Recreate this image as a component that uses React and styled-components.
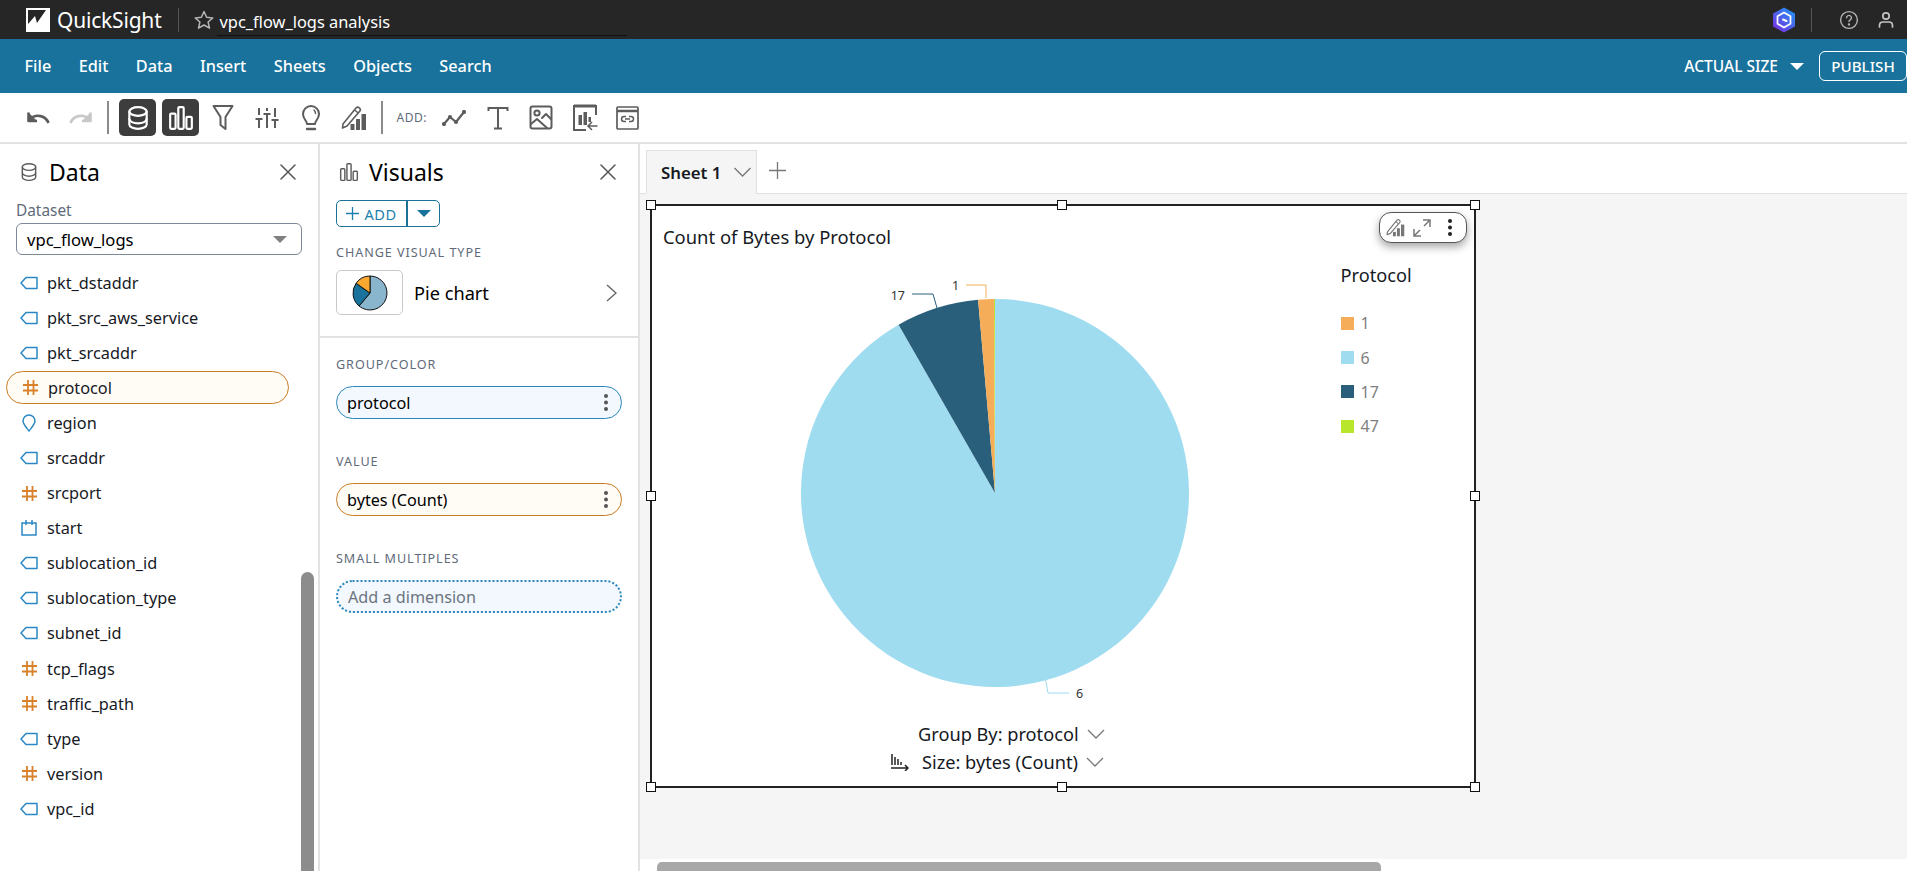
import React from "react";
import styled, { createGlobalStyle } from "styled-components";

const Global = createGlobalStyle`
  html, body { margin: 0; padding: 0; background: #fff; }
  body { font-family: "Noto Sans", "Open Sans", sans-serif; color: #16191f; overflow: hidden; }
  * { box-sizing: border-box; }
`;

const Page = styled.div`
  width: 1907px; height: 871px; display: flex; flex-direction: column; overflow: hidden;
`;
const TopBar = styled.header`
  height: 39px; background: #262626; display: flex; align-items: center; padding-left: 26px; color: #fff; flex: none;
`;
const Brand = styled.span`
  font-size: 21px; margin-left: 7px; color: #fff; letter-spacing: -0.2px;
`;
const TopDivider = styled.span`
  width: 1px; height: 24px; background: #555; margin-left: ${p => p.$ml}px;
`;
const StarSlot = styled.span`
  display: flex; margin-left: 15px;
`;
const TitleBox = styled.div`
  margin-left: 3px; width: 410px; height: 32px; border-bottom: 1px solid #111; font-size: 16.4px; line-height: 35px; padding-left: 3px;
`;
const TopRight = styled.div`
  margin-left: auto; display: flex; align-items: center; height: 100%;
`;
const TopIcon = styled.span`
  display: flex; margin-left: ${p => p.$ml}px;
`;
const MenuBar = styled.nav`
  height: 54px; background: #19729c; color: #fff; display: flex; align-items: center; padding-left: 24.5px; gap: 27.4px; flex: none; font-size: 16.3px; font-weight: 500;
`;
const MenuItem = styled.span``;
const MenuRight = styled.div`
  margin-left: auto; display: flex; align-items: center; font-size: 15.5px;
`;
const Publish = styled.button`
  width: 88px; height: 30px; border: 1px solid #fff; border-radius: 6px; background: transparent; color: #fff; font: 500 15.2px "Noto Sans", sans-serif; margin-left: 15px; padding: 0;
`;
const Toolbar = styled.div`
  height: 51px; border-bottom: 2px solid #e2e2e2; display: flex; align-items: center; padding-left: 16px; flex: none;
`;
const Slot = styled.span`
  width: ${p => p.$w || 43.5}px; display: flex; justify-content: center; align-items: center; flex: none;
`;
const Active = styled.span`
  width: 37px; height: 37px; background: #3d3d3d; border-radius: 5px; display: flex; align-items: center; justify-content: center; margin-right: ${p => p.$mr}px; flex: none;
`;
const ToolSep = styled.span`
  width: 2px; height: 33px; background: #8a8a8a; margin: 0 ${p => p.$mr}px 0 ${p => p.$ml}px; flex: none;
`;
const AddLabel = styled.span`
  width: 33px; font-size: 12px; color: #5f6b7a; letter-spacing: 0.5px; margin-right: 3px; white-space: nowrap;
`;
const Workspace = styled.div`
  flex: 1; display: flex; min-height: 0;
`;
const Panel = styled.aside`
  width: 320px; border-right: 2px solid #e2e2e2; background: #fff; flex: none; position: relative; overflow: hidden;
`;
const PanelHead = styled.div`
  height: 56px; display: flex; align-items: center; padding: 0 22px 1px 19px;
`;
const PanelTitle = styled.h2`
  margin: 0 0 0 10px; font-size: 23px; font-weight: 400; color: #000; flex: 1;
`;
const DatasetLabel = styled.div`
  font-size: 15.4px; line-height: 18px; color: #5f6b7a; margin: 2px 0 0 16px; height: 21px;
`;
const Select = styled.div`
  width: 286px; height: 32px; margin-left: 16px; border: 1px solid #7d8998; border-radius: 6px; display: flex; align-items: center; padding: 0 14px 0 10px; justify-content: space-between; font-size: 16.6px; color: #000;
`;
const Caret = styled.span`
  width: 0; height: 0; border-left: 7px solid transparent; border-right: 7px solid transparent; border-top: 7px solid ${p => p.$c}; display: block;
`;
const FieldList = styled.div`
  margin-top: 10px; display: flex; flex-direction: column;
`;
const FieldRow = styled.div`
  height: ${p => p.$on ? 33 : 35.1}px; display: flex; align-items: center; gap: 9px; font-size: 16.3px; color: #16191f;
  margin: ${p => p.$on ? "1px 0 1.1px 6px" : "0"};
  padding-left: ${p => p.$on ? 14 : 20}px;
  width: ${p => p.$on ? "283px" : "auto"};
  border: ${p => p.$on ? "1px solid #c97c23" : "0"};
  border-radius: 17px;
  background: ${p => p.$on ? "#fffbf5" : "transparent"};
`;
const FieldGlyph = styled.span`
  width: 18px; display: flex; justify-content: center; flex: none;
`;
const ScrollThumb = styled.div`
  position: absolute; left: 301px; top: 428px; width: 13px; bottom: -10px; background: #8c8c8c; border-radius: 7px 7px 0 0;
`;
const AddRow = styled.div`
  margin: 0 0 0 16px; width: 104px; height: 27px; border: 1px solid #1b7196; border-radius: 5px; display: flex; align-items: center; color: #1c80ad; font-size: 14.6px; letter-spacing: 0.5px;
`;
const AddMain = styled.span`
  width: 71px; height: 100%; border-right: 2px solid #1b7196; display: flex; align-items: center; justify-content: center; gap: 5px;
`;
const AddDrop = styled.span`
  flex: 1; display: flex; justify-content: center; align-items: center;
`;
const SectionLabel = styled.div`
  font-size: 12.6px; line-height: 16px; letter-spacing: 0.95px; color: #5f6b7a; margin: ${p => p.$mt}px 0 0 16px;
`;
const TypeRow = styled.div`
  display: flex; align-items: center; margin-top: 9px; padding-bottom: 21px; border-bottom: 2px solid #e2e2e2; padding-left: 16px; font-size: 18.2px; color: #000;
`;
const Thumb = styled.span`
  width: 67px; height: 45px; border: 1px solid #c9c9c9; border-radius: 5px; display: flex; align-items: center; justify-content: center; margin-right: 11px;
`;
const TypeName = styled.span`
  flex: 1;
`;
const Chev = styled.span`
  display: flex; margin-right: 21px;
`;
const Pill = styled.div`
  width: 286px; height: 33px; margin: ${p => p.$mt}px 0 0 16px; border-radius: 17px; border: ${p => p.$dotted ? "2px dotted #2b86bb" : `1px solid ${p.$c}`};
  background: ${p => p.$bg}; display: flex; align-items: center; padding: 0 12px 0 10px; justify-content: space-between; font-size: 16.2px; color: ${p => p.$dotted ? "#6b7480" : "#000"};
`;
const Main = styled.main`
  flex: 1; min-width: 0; display: flex; flex-direction: column; background: #f5f5f5;
`;
const TabBar = styled.div`
  height: 50px; background: #fff; border-bottom: 1px solid #e0e0e0; display: flex; align-items: flex-end; flex: none; padding-left: 6px;
`;
const Tab = styled.div`
  width: 111px; height: 44px; margin-bottom: -1px; background: #f5f5f5; border: 1px solid #e0e0e0; border-bottom: 1px solid #f5f5f5; display: flex; align-items: center; padding: 0 4px 0 14px; font-weight: 600; font-size: 16.8px; justify-content: space-between; color: #16191f;
`;
const Plus = styled.span`
  display: flex; align-self: center; margin: 4px 0 0 12px;
`;
const Canvas = styled.div`
  flex: 1; min-height: 0; padding: 10px 0 0 10px;
`;
const Card = styled.section`
  width: 826px; height: 584px; border: 2px solid #222; background: #fff; position: relative;
`;
const CardTitle = styled.h3`
  margin: 19px 0 0 11px; font-size: 18.4px; line-height: 24px; font-weight: 400; color: #16191f;
`;
const PlotRow = styled.div`
  margin-top: 9px; display: flex; height: 464px;
`;
const PlotSvg = styled.svg`
  width: 689px; height: 450px; flex: none; display: block;
`;
const PieLabel = styled.text`
  font: 12.5px "Noto Sans", sans-serif; fill: #333;
`;
const Legend = styled.div`
  margin: 5px 0 0 -0.5px;
`;
const LegendTitle = styled.div`
  font-size: 18.2px; line-height: 24px; color: #16191f; margin-bottom: 19px;
`;
const LegendItem = styled.div`
  height: 34.4px; display: flex; align-items: center; gap: 7px; font-size: 16px; color: #7f7f7f;
`;
const Swatch = styled.span`
  width: 13px; height: 13px; background: ${p => p.$c};
`;
const Controls = styled.div`
  display: flex; flex-direction: column; gap: 3.5px;
`;
const ControlRow = styled.div`
  height: 24px; display: flex; align-items: center; margin-left: ${p => p.$ml}px; font-size: 18.2px; color: #16191f; white-space: nowrap;
`;
const ControlIcon = styled.span`
  display: flex; margin-right: 13px;
`;
const ControlChev = styled.span`
  display: flex; margin-left: 8px;
`;
const Handle = styled.span`
  position: absolute; width: 10px; height: 10px; background: #fff; border: 1.5px solid #111;
  left: ${p => p.$l}; top: ${p => p.$t};
`;
const FloatBar = styled.div`
  position: absolute; right: 7px; top: 6px; width: 88px; height: 31px; border: 1px solid #555; border-radius: 12px; background: #fff; box-shadow: 0 4px 8px rgba(0,0,0,.35); display: flex; align-items: center; gap: 8px; padding-left: 6px;
`;
const FloatDots = styled.span`
  display: flex; margin-left: 8px;
`;
const HScroll = styled.div`
  height: 12px; background: #fff; padding: 3px 0 0 17px; flex: none;
`;
const HThumb = styled.div`
  width: 724px; height: 9px; background: #a8a8a8; border-radius: 5px 5px 0 0;
`;

const G = "#5c5c5c";
const ic = { fill: "none", stroke: G, strokeWidth: 2, strokeLinecap: "round", strokeLinejoin: "round" };

const Logo = () => (
  <svg width="24" height="24" viewBox="0 0 24 24">
    <rect width="24" height="24" fill="#fff" />
    <polygon points="2,2 20,2 11,15 9,8 2,16" fill="#262626" />
  </svg>
);
const Star = () => (
  <svg width="20" height="20" viewBox="0 0 20 20" fill="none" stroke="#b5b5b5" strokeWidth="1.5" strokeLinejoin="round">
    <polygon points="10,1.5 12.6,7.3 18.8,7.9 14.1,12 15.5,18.2 10,15 4.5,18.2 5.9,12 1.2,7.9 7.4,7.3" />
  </svg>
);
const Hex = () => (
  <svg width="24" height="26" viewBox="0 0 24 26">
    <defs>
      <linearGradient id="hx" x1="0.9" y1="0" x2="0.1" y2="1">
        <stop offset="0" stopColor="#1f97f5" />
        <stop offset="1" stopColor="#7a2be0" />
      </linearGradient>
    </defs>
    <polygon points="12,0.5 23,6.5 23,19.5 12,25.5 1,19.5 1,6.5" fill="url(#hx)" />
    <polygon points="12,5.5 18.5,9.2 18.5,16.8 12,20.5 5.5,16.8 5.5,9.2" fill="none" stroke="#fff" strokeWidth="1.7" />
    <path d="M11 12.5l3.5 1.5" stroke="#fff" strokeWidth="2" strokeLinecap="round" />
  </svg>
);
const Help = () => (
  <svg width="20" height="20" viewBox="0 0 20 20" fill="none" stroke="#b4b4b4" strokeWidth="1.4" strokeLinecap="round">
    <circle cx="10" cy="10" r="8.4" />
    <path d="M7.6 7.8a2.4 2.4 0 1 1 3.6 2.1c-.8.4-1.2.9-1.2 1.7" />
    <circle cx="10" cy="14.4" r=".5" fill="#b4b4b4" />
  </svg>
);
const User = () => (
  <svg width="16" height="18" viewBox="0 0 16 18" fill="none" stroke="#c4c4c4" strokeWidth="1.7" strokeLinecap="round">
    <circle cx="8" cy="5" r="3.2" />
    <path d="M1.5 16v-1.5C1.5 12 3 11 5 11h6c2 0 3.5 1 3.5 3.5V16" />
  </svg>
);
const Undo = ({ c }) => (
  <svg width="24" height="15" viewBox="0 0 24 15" fill="none" stroke={c} strokeWidth="2.6" strokeLinejoin="round">
    <path d="M22.5 13C20 6 10 3 4 9" />
    <path d="M2.5 2.500v8.500h8.500" fill={c} />
  </svg>
);
const Redo = ({ c }) => (
  <svg width="24" height="15" viewBox="0 0 24 15" fill="none" stroke={c} strokeWidth="2.6" strokeLinejoin="round">
    <path d="M1.500 13C4 6 14 3 20 9" />
    <path d="M21.500 2.500v8.500h-8.500" fill={c} />
  </svg>
);
const Db = ({ c = "#fff", s = 26, w = 2 }) => (
  <svg width={s} height={s} viewBox="0 0 24 24" fill="none" stroke={c} strokeWidth={w} strokeLinecap="round">
    <path d="M4 6c0-2.2 3.6-4 8-4s8 1.8 8 4v12c0 2.2-3.6 4-8 4s-8-1.8-8-4z" />
    <path d="M4 6c0 2.2 3.6 4 8 4s8-1.8 8-4" />
    <path d="M4 13c0 2.2 3.6 4 8 4s8-1.8 8-4" />
  </svg>
);
const Bars = ({ c = "#fff", s = 26, w = 2 }) => (
  <svg width={s} height={s} viewBox="0 0 24 24" fill="none" stroke={c} strokeWidth={w}>
    <rect x="2" y="8" width="5" height="14" rx="1" />
    <rect x="9.5" y="2" width="5" height="20" rx="1" />
    <rect x="17" y="11" width="5" height="11" rx="1" />
  </svg>
);
const Funnel = () => (
  <svg width="22" height="28" viewBox="0 0 22 28" {...ic}><path d="M1.5 2h19L13.5 13v12l-5-4v-8z" /></svg>
);
const Sliders = () => (
  <svg width="24" height="24" viewBox="0 0 24 24" {...ic} strokeWidth="2" strokeLinecap="butt">
    <path d="M4 2v7M4 13v9M12 2v3M12 9v13M20 2v9M20 15v7" />
    <path d="M0.5 13h7M8.5 8h7M16.5 14h7" />
  </svg>
);
const Bulb = () => (
  <svg width="20" height="28" viewBox="0 0 20 28" {...ic}>
    <path d="M6 20c0-3-4-5-4-10a8 8 0 0 1 16 0c0 5-4 7-4 10z" />
    <path d="M6 25h8" strokeWidth="2.4" />
    <path d="M13 6c1 1 1.500 2 1.500 3.500" strokeWidth="1.400" />
  </svg>
);
const PencilChart = ({ c = G, s = 26 }) => (
  <svg width={s} height={s} viewBox="0 0 26 26" fill="none">
    <path d="M2 19L15 3c1-1 2.400-1 3.500 0s1 2.300.2 3.300L6 21l-4.500 2z" stroke={c} strokeWidth="1.600" strokeLinejoin="round" />
    <path d="M13.500 5l3.800 3" stroke={c} strokeWidth="1.400" />
    <rect x="9.500" y="19" width="4" height="6" fill={c} />
    <rect x="15" y="14" width="4" height="11" fill={c} />
    <rect x="20.500" y="9" width="4.500" height="16" fill={c} />
  </svg>
);
const LineIcon = () => (
  <svg width="24" height="16" viewBox="0 0 24 16" {...ic} strokeWidth="2.200">
    <path d="M2 14l6-7 6 5 8-10" />
    <circle cx="2" cy="14" r="1" fill={G} /><circle cx="8" cy="7" r="1" fill={G} /><circle cx="14" cy="12" r="1" fill={G} /><circle cx="22" cy="2" r="1" fill={G} />
  </svg>
);
const TIcon = () => (
  <svg width="22" height="24" viewBox="0 0 22 24" {...ic} strokeLinecap="butt" strokeLinejoin="miter">
    <path d="M1.500 5V2h19v3M11 2v20M7 22.500h8" />
  </svg>
);
const ImageIcon = () => (
  <svg width="24" height="25" viewBox="0 0 24 25" {...ic}>
    <rect x="1.500" y="1.500" width="21" height="22" rx="2" />
    <circle cx="8" cy="8" r="2.600" />
    <path d="M2 19l6-5 10 9M13 13l4-4 5 5" />
  </svg>
);
const ChartArrow = () => (
  <svg width="26" height="27" viewBox="0 0 26 27" fill="none" stroke={G} strokeWidth="2">
    <path d="M24 11V2H2v24h12" />
    <path d="M2 2h22" strokeWidth="3" />
    <rect x="6.500" y="11" width="3.500" height="10" fill={G} stroke="none" />
    <rect x="11.500" y="8" width="3.500" height="13" fill={G} stroke="none" />
    <rect x="16.500" y="13" width="2.500" height="5" fill={G} stroke="none" />
    <path d="M25.500 22h-9M20 18l-4 4 4 4" strokeWidth="1.500" />
  </svg>
);
const EmbedIcon = () => (
  <svg width="23" height="26" viewBox="0 0 23 26" fill="none" stroke={G} strokeWidth="1.700">
    <rect x="1" y="2" width="21" height="22" rx="1" />
    <path d="M1 6h21" strokeWidth="2.500" />
    <path d="M10 11.500H8a2.500 2.500 0 0 0 0 5h2M13 11.500h2a2.500 2.500 0 0 1 0 5h-2M9 14h5" strokeWidth="1.500" />
  </svg>
);
const Close = () => (
  <svg width="16" height="16" viewBox="0 0 16 16" stroke="#555" strokeWidth="1.500" strokeLinecap="round"><path d="M1 1l14 14M15 1L1 15" /></svg>
);
const Tag = () => (
  <svg width="18" height="14" viewBox="0 0 18 14" fill="none" stroke="#2b88c4" strokeWidth="1.500" strokeLinejoin="round">
    <path d="M1 7l5-5.500h11v11H6z" />
  </svg>
);
const Hash = () => (
  <svg width="15" height="15" viewBox="0 0 15 15" stroke="#d9822b" strokeWidth="1.800"><path d="M5 0v15M10.500 0v15M0 5h15M0 10.500h15" /></svg>
);
const Pin = () => (
  <svg width="14" height="18" viewBox="0 0 14 18" fill="none" stroke="#2b88c4" strokeWidth="1.500" strokeLinejoin="round">
    <path d="M7 17C4 13 1 10 1 7a6 6 0 0 1 12 0c0 3-3 6-6 10z" />
  </svg>
);
const Cal = () => (
  <svg width="16" height="16" viewBox="0 0 16 16" fill="none" stroke="#2b88c4" strokeWidth="1.500">
    <rect x="1" y="3" width="14" height="12" /><path d="M5 0v5M11 0v5" />
  </svg>
);
const glyphs = { t: Tag, n: Hash, g: Pin, d: Cal };

const Dots = () => (
  <svg width="6" height="19" viewBox="0 0 6 19" fill="#555"><circle cx="3" cy="3" r="2" /><circle cx="3" cy="9.500" r="2" /><circle cx="3" cy="16" r="2" /></svg>
);
const ChevDown = ({ w = 18, s = "#777" }) => (
  <svg width={w} height="10" viewBox="0 0 18 10" fill="none" stroke={s} strokeWidth="1.300"><path d="M1 1l8 8 8-8" /></svg>
);

const pt = (cx, cy, r, a) => {
  const t = (a * Math.PI) / 180;
  return [cx + r * Math.sin(t), cy - r * Math.cos(t)];
};
const slice = (cx, cy, r, a0, a1) => {
  const [x0, y0] = pt(cx, cy, r, a0);
  const [x1, y1] = pt(cx, cy, r, a1);
  const large = a1 - a0 > 180 ? 1 : 0;
  return `M${cx} ${cy}L${x0} ${y0}A${r} ${r} 0 ${large} 1 ${x1} ${y1}Z`;
};
const slices = [
  { from: 0, to: 330.2, c: "#9fdcf0" },
  { from: 330.2, to: 355, c: "#2a5f7c" },
  { from: 355, to: 359.7, c: "#f5ad5a" },
  { from: 359.7, to: 360, c: "#b8e62a" },
];

const MiniPie = () => (
  <svg width="36" height="36" viewBox="0 0 36 36" stroke="#111" strokeWidth="1">
    <path d={slice(18, 18, 17, 0, 220)} fill="#8ab6cd" />
    <path d={slice(18, 18, 17, 220, 305)} fill="#19729c" />
    <path d={slice(18, 18, 17, 305, 360)} fill="#f9a92f" />
  </svg>
);

const fields = [
  ["pkt_dstaddr", "t"], ["pkt_src_aws_service", "t"], ["pkt_srcaddr", "t"], ["protocol", "n", true], ["region", "g"],
  ["srcaddr", "t"], ["srcport", "n"], ["start", "d"], ["sublocation_id", "t"], ["sublocation_type", "t"], ["subnet_id", "t"],
  ["tcp_flags", "n"], ["traffic_path", "n"], ["type", "t"], ["version", "n"], ["vpc_id", "t"],
];
const legend = [["1", "#f5ad5a"], ["6", "#9fdcf0"], ["17", "#2a5f7c"], ["47", "#b8e62a"]];
const handles = [
  ["-6px", "-6px"], ["calc(50% - 6px)", "-6px"], ["calc(100% - 4px)", "-6px"],
  ["-6px", "calc(50% - 5px)"], ["calc(100% - 4px)", "calc(50% - 5px)"],
  ["-6px", "calc(100% - 4px)"], ["calc(50% - 6px)", "calc(100% - 4px)"], ["calc(100% - 4px)", "calc(100% - 4px)"],
];

export default function App() {
  return (
    <Page>
      <Global />
      <TopBar>
        <Logo />
        <Brand>QuickSight</Brand>
        <TopDivider $ml={16} />
        <StarSlot><Star /></StarSlot>
        <TitleBox>vpc_flow_logs analysis</TitleBox>
        <TopRight>
          <Hex />
          <TopDivider $ml={15} />
          <TopIcon $ml={27}><Help /></TopIcon>
          <TopIcon $ml={19}><User /></TopIcon>
          <TopIcon $ml={13} />
        </TopRight>
      </TopBar>
      <MenuBar>
        {["File", "Edit", "Data", "Insert", "Sheets", "Objects", "Search"].map(m => <MenuItem key={m}>{m}</MenuItem>)}
        <MenuRight>
          ACTUAL SIZE
          <TopIcon $ml={12}><Caret $c="#fff" /></TopIcon>
          <Publish>PUBLISH</Publish>
        </MenuRight>
      </MenuBar>
      <Toolbar>
        <Slot $w={43}><Undo c="#5c5c5c" /></Slot>
        <Slot $w={44}><Redo c="#c8c8c8" /></Slot>
        <ToolSep $ml={4} $mr={10} />
        <Active $mr={6}><Db /></Active>
        <Active $mr={2}><Bars /></Active>
        <Slot $w={44}><Funnel /></Slot>
        <Slot $w={44}><Sliders /></Slot>
        <Slot $w={43}><Bulb /></Slot>
        <Slot $w={44}><PencilChart /></Slot>
        <ToolSep $ml={4.5} $mr={14} />
        <AddLabel>ADD:</AddLabel>
        <Slot><LineIcon /></Slot>
        <Slot><TIcon /></Slot>
        <Slot><ImageIcon /></Slot>
        <Slot><ChartArrow /></Slot>
        <Slot $w={42}><EmbedIcon /></Slot>
      </Toolbar>
      <Workspace>
        <Panel>
          <PanelHead>
            <Db c="#5c5c5c" s={20} w={1.700} />
            <PanelTitle>Data</PanelTitle>
            <Close />
          </PanelHead>
          <DatasetLabel>Dataset</DatasetLabel>
          <Select>vpc_flow_logs<Caret $c="#808080" /></Select>
          <FieldList>
            {fields.map(([name, kind, on]) => {
              const I = glyphs[kind];
              return <FieldRow key={name} $on={on}><FieldGlyph><I /></FieldGlyph>{name}</FieldRow>;
            })}
          </FieldList>
          <ScrollThumb />
        </Panel>
        <Panel>
          <PanelHead>
            <Bars c="#5c5c5c" s={20} w={1.700} />
            <PanelTitle>Visuals</PanelTitle>
            <Close />
          </PanelHead>
          <AddRow>
            <AddMain>
              <svg width="13" height="13" viewBox="0 0 13 13" stroke="#1c80ad" strokeWidth="1.300"><path d="M6.500 0v13M0 6.500h13" /></svg>
              ADD
            </AddMain>
            <AddDrop><Caret $c="#19729c" /></AddDrop>
          </AddRow>
          <SectionLabel $mt={18}>CHANGE VISUAL TYPE</SectionLabel>
          <TypeRow>
            <Thumb><MiniPie /></Thumb>
            <TypeName>Pie chart</TypeName>
            <Chev>
              <svg width="11" height="18" viewBox="0 0 11 18" fill="none" stroke="#666" strokeWidth="1.400"><path d="M1 1l9 8-9 8" /></svg>
            </Chev>
          </TypeRow>
          <SectionLabel $mt={18.5}>GROUP/COLOR</SectionLabel>
          <Pill $mt={13.5} $c="#2b86bb" $bg="#f2f8fd">protocol<Dots /></Pill>
          <SectionLabel $mt={35}>VALUE</SectionLabel>
          <Pill $mt={13} $c="#c97c23" $bg="#fffbf5">bytes (Count)<Dots /></Pill>
          <SectionLabel $mt={35}>SMALL MULTIPLES</SectionLabel>
          <Pill $mt={13} $dotted $bg="#f2f8fd">Add a dimension</Pill>
        </Panel>
        <Main>
          <TabBar>
            <Tab>Sheet 1<ChevDown w={19} /></Tab>
            <Plus>
              <svg width="17" height="17" viewBox="0 0 17 17" stroke="#777" strokeWidth="1.300"><path d="M8.500 0v17M0 8.500h17" /></svg>
            </Plus>
          </TabBar>
          <Canvas>
            <Card>
              {handles.map(([l, t], i) => <Handle key={i} $l={l} $t={t} />)}
              <FloatBar>
                <PencilChart c="#777" s={19} />
                <svg width="18" height="18" viewBox="0 0 18 18" fill="none" stroke="#777" strokeWidth="1.500"><path d="M1 17L7 11M1 10v7h7M17 1L11 7M10 1h7v7" /></svg>
                <FloatDots>
                  <svg width="6" height="19" viewBox="0 0 6 19" fill="#222"><circle cx="3" cy="3" r="2" /><circle cx="3" cy="9.500" r="2" /><circle cx="3" cy="16" r="2" /></svg>
                </FloatDots>
              </FloatBar>
              <CardTitle>Count of Bytes by Protocol</CardTitle>
              <PlotRow>
                <PlotSvg viewBox="0 0 689 450">
                  {slices.map(s => <path key={s.c} d={slice(343, 235, 194, s.from, s.to)} fill={s.c} />)}
                  <path d="M260 36H281L285 50" fill="none" stroke="#2a5f7c" strokeWidth="1" />
                  <path d="M314 27H334V40" fill="none" stroke="#f5ad5a" strokeWidth="1" />
                  <path d="M393.700 422L396 435H417" fill="none" stroke="#9fdcf0" strokeWidth="1" />
                  <PieLabel x="238.700" y="41.500">17</PieLabel>
                  <PieLabel x="300" y="31.500">1</PieLabel>
                  <PieLabel x="424" y="439.500">6</PieLabel>
                </PlotSvg>
                <Legend>
                  <LegendTitle>Protocol</LegendTitle>
                  {legend.map(([n, c]) => <LegendItem key={n}><Swatch $c={c} />{n}</LegendItem>)}
                </Legend>
              </PlotRow>
              <Controls>
                <ControlRow $ml={266}>Group By: protocol<ControlChev><ChevDown /></ControlChev></ControlRow>
                <ControlRow $ml={239}>
                  <ControlIcon>
                    <svg width="18" height="18" viewBox="0 0 18 18" fill="none" stroke="#222" strokeWidth="1.500">
                      <path d="M1 1v11M4 4v8M7 6v6M10 9v3M0 15h16M14 12l3 3-3 3" />
                    </svg>
                  </ControlIcon>
                  Size: bytes (Count)<ControlChev><ChevDown /></ControlChev>
                </ControlRow>
              </Controls>
            </Card>
          </Canvas>
          <HScroll><HThumb /></HScroll>
        </Main>
      </Workspace>
    </Page>
  );
}
